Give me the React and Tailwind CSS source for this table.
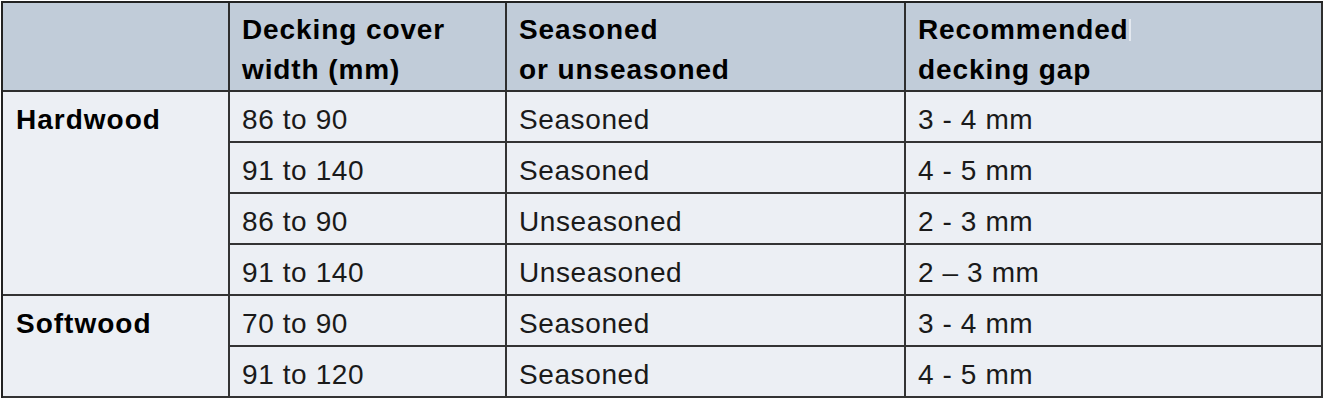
const rows = [
  { group: 'Hardwood', span: 4, width: '86 to 90', seasoned: 'Seasoned', gap: '3 - 4 mm' },
  { width: '91 to 140', seasoned: 'Seasoned', gap: '4 - 5 mm' },
  { width: '86 to 90', seasoned: 'Unseasoned', gap: '2 - 3 mm' },
  { width: '91 to 140', seasoned: 'Unseasoned', gap: '2 – 3 mm' },
  { group: 'Softwood', span: 2, width: '70 to 90', seasoned: 'Seasoned', gap: '3 - 4 mm' },
  { width: '91 to 120', seasoned: 'Seasoned', gap: '4 - 5 mm' },
];

const headCell = 'border-r-2 border-b-2 border-[#2e2e2e] bg-[#c1ccd9] align-top pt-[7px] pl-[12px] text-left font-bold leading-[40px] tracking-[0.9px] text-black';
const bodyCell = 'border-r-2 border-b-2 border-[#333] bg-[#eceff4] align-top pt-[12px] pl-[12px] h-[51px] leading-[32px] tracking-[0.6px] text-[#1a1a1a]';

export default function App() {
  return (
    <div className="pl-[1px] pt-[1px] bg-white min-h-[400px]" style={{ fontFamily: '"Liberation Sans", Arial, sans-serif' }}>
      <table className="table-fixed border-separate border-spacing-0 border-l-2 border-t-2 border-[#222] w-[1322px] text-[28px]">
        <colgroup>
          <col className="w-[227px]" />
          <col className="w-[277px]" />
          <col className="w-[399px]" />
          <col className="w-[417px]" />
        </colgroup>
        <thead>
          <tr>
            <th className={`${headCell} h-[89px]`}></th>
            <th className={headCell}>
              Decking cover
              <br />
              width (mm)
            </th>
            <th className={headCell}>
              Seasoned
              <br />
              or unseasoned
            </th>
            <th className={headCell}>
              Recommended
              <span className="inline-block w-[2px] h-[22px] bg-[#e3e8ef] align-[-2px]"></span>
              <br />
              decking gap
            </th>
          </tr>
        </thead>
        <tbody>
          {rows.map((r, i) => (
            <tr key={i}>
              {r.group && (
                <td rowSpan={r.span} className={`${bodyCell} pl-[13px] font-bold tracking-[1px] text-black`}>
                  {r.group}
                </td>
              )}
              <td className={bodyCell}>{r.width}</td>
              <td className={bodyCell}>{r.seasoned}</td>
              <td className={bodyCell}>{r.gap}</td>
            </tr>
          ))}
        </tbody>
      </table>
    </div>
  );
}
